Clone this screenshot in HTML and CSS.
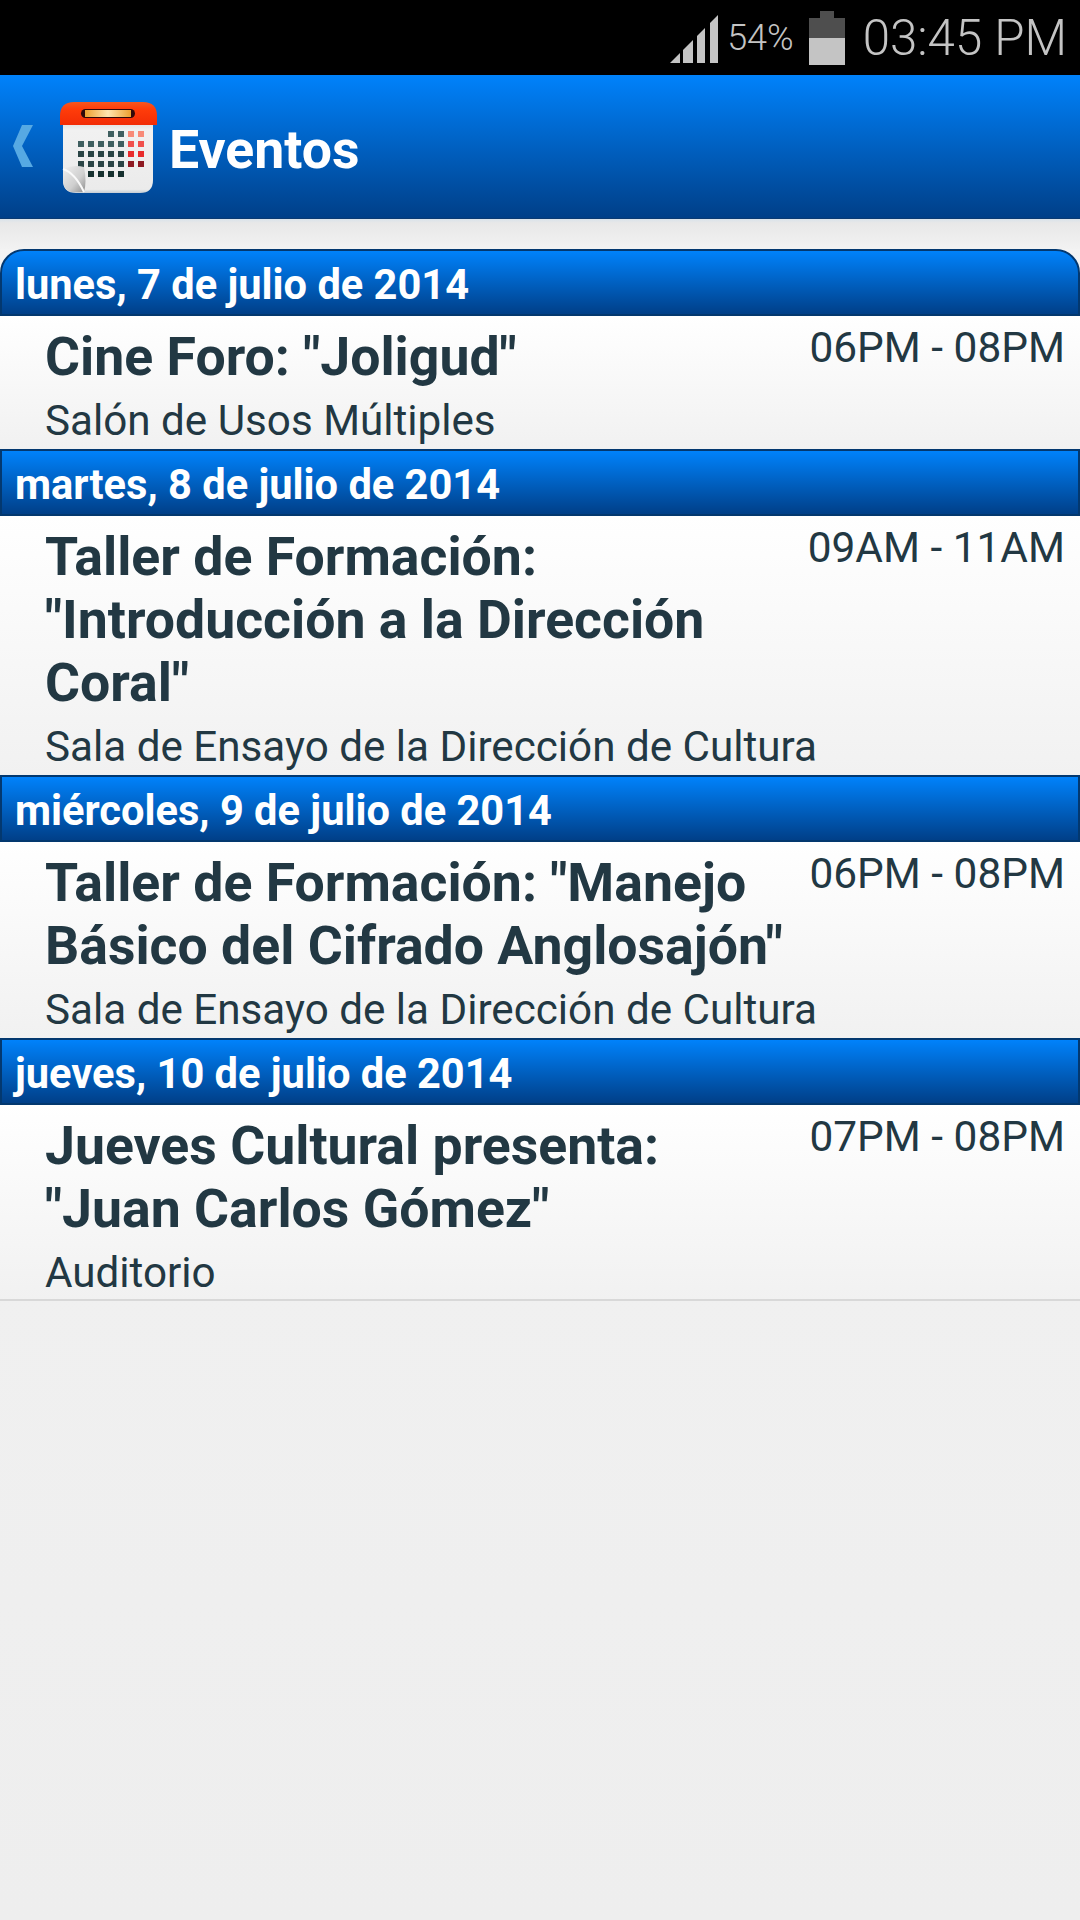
FILE: index.html
```html
<!DOCTYPE html>
<html lang="es">
<head>
    <meta charset="UTF-8">
    <meta name="viewport" content="width=device-width, initial-scale=1.0">
    <title>Eventos</title>
    <link rel="stylesheet" href="styles.css">
</head>
<body>
    <div class="statusbar">
        <svg class="signal" width="48" height="48" viewBox="0 0 48 48">
            <path d="M0 48 L10 38 V48 Z" fill="#c4c4c4"/>
            <path d="M13 35 L23 25 V48 H13 Z" fill="#c4c4c4"/>
            <path d="M27 21 L35 13 V48 H27 Z" fill="#c4c4c4"/>
            <path d="M40 8 L48 0 V48 H40 Z" fill="#c4c4c4"/>
        </svg>
        <span class="pct">54%</span>
        <svg class="battery" width="36" height="54" viewBox="0 0 36 54">
            <rect x="11" y="0" width="14" height="7" fill="#4e4e4e"/>
            <rect x="0" y="7" width="36" height="20" fill="#4e4e4e"/>
            <rect x="0" y="27" width="36" height="27" fill="#c4c4c4"/>
        </svg>
        <span class="clock">03:45 PM</span>
    </div>

    <div class="header">
        <svg class="back" width="20" height="42" viewBox="0 0 20 42">
            <path d="M9 0 H20 L9 21 L20 42 H9 L0 21 Z" fill="#56a9e3"/>
        </svg>
        <svg class="cal" width="97" height="94" viewBox="0 0 97 94">
            <defs>
                <linearGradient id="calTop" x1="0" y1="0" x2="0" y2="1">
                    <stop offset="0" stop-color="#f6571f"/>
                    <stop offset="0.3" stop-color="#ff3d0a"/>
                    <stop offset="1" stop-color="#f22c06"/>
                </linearGradient>
                <linearGradient id="calBody" x1="0" y1="0" x2="0" y2="1">
                    <stop offset="0" stop-color="#d8d8d8"/>
                    <stop offset="0.14" stop-color="#f1f1f1"/>
                    <stop offset="0.95" stop-color="#ebebeb"/>
                    <stop offset="1" stop-color="#c4ccd4"/>
                </linearGradient>
                <linearGradient id="calRing" x1="0" y1="0" x2="1" y2="0">
                    <stop offset="0" stop-color="#eea030"/>
                    <stop offset="0.5" stop-color="#ffe6b0"/>
                    <stop offset="1" stop-color="#eea030"/>
                </linearGradient>
                <linearGradient id="calCurl" x1="0" y1="0" x2="1" y2="1">
                    <stop offset="0" stop-color="#efefef"/>
                    <stop offset="0.6" stop-color="#cfcfcf"/>
                    <stop offset="1" stop-color="#8e8e8e"/>
                </linearGradient>
            </defs>
            <path d="M3 20 H93 V80 Q93 93 80 93 H16 Q3 93 3 80 Z" fill="url(#calBody)"/>
            <path d="M0 25 V16 Q0 2 14 2 H83 Q97 2 97 16 V25 Z" fill="url(#calTop)"/>
            <rect x="21" y="9" width="54" height="9" rx="4.5" fill="#30090a"/>
            <rect x="25" y="10" width="46" height="7" fill="url(#calRing)"/>
            <g fill="#3f5f60">
                <rect x="48" y="31" width="6" height="6"/><rect x="58" y="31" width="6" height="6"/>
                <rect x="18" y="41" width="6" height="6"/><rect x="28" y="41" width="6" height="6"/><rect x="38" y="41" width="6" height="6"/><rect x="48" y="41" width="6" height="6"/><rect x="58" y="41" width="6" height="6"/>
            </g>
            <g fill="#2a4445">
                <rect x="18" y="51" width="6" height="6"/><rect x="28" y="51" width="6" height="6"/><rect x="38" y="51" width="6" height="6"/><rect x="48" y="51" width="6" height="6"/><rect x="58" y="51" width="6" height="6"/>
                <rect x="18" y="61" width="6" height="6"/><rect x="28" y="61" width="6" height="6"/><rect x="38" y="61" width="6" height="6"/><rect x="48" y="61" width="6" height="6"/><rect x="58" y="61" width="6" height="6"/>
            </g>
            <g fill="#16302f">
                <rect x="28" y="71" width="6" height="6"/><rect x="38" y="71" width="6" height="6"/><rect x="48" y="71" width="6" height="6"/><rect x="58" y="71" width="6" height="6"/>
            </g>
            <g fill="#f88a78">
                <rect x="68" y="31" width="6" height="6"/><rect x="78" y="31" width="6" height="6"/>
            </g>
            <g fill="#f0504c">
                <rect x="68" y="41" width="6" height="6"/><rect x="78" y="41" width="6" height="6"/>
            </g>
            <g fill="#e82c2c">
                <rect x="68" y="51" width="6" height="6"/><rect x="78" y="51" width="6" height="6"/>
            </g>
            <g fill="#8e1a22">
                <rect x="68" y="61" width="6" height="6"/><rect x="78" y="61" width="6" height="6"/>
            </g>
            <path d="M3 69 Q14 64 24 67 Q27 82 24 92 H16 Q3 93 3 80 Z" fill="url(#calCurl)"/>
            <path d="M3 69 Q15 73 24 92" fill="none" stroke="#fafafa" stroke-width="2"/>
        </svg>
        <span class="header-title">Eventos</span>
    </div>

    <div class="lista">
        <div class="dia dia-primero">lunes, 7 de julio de 2014</div>
        <div class="evento">
            <div class="evento-top">
                <div class="evento-titulo">Cine Foro: "Joligud"</div>
                <div class="evento-hora">06PM - 08PM</div>
            </div>
            <div class="evento-lugar">Salón de Usos Múltiples</div>
        </div>

        <div class="dia">martes, 8 de julio de 2014</div>
        <div class="evento">
            <div class="evento-top">
                <div class="evento-titulo">Taller de Formación: "Introducción a la Dirección Coral"</div>
                <div class="evento-hora">09AM - 11AM</div>
            </div>
            <div class="evento-lugar">Sala de Ensayo de la Dirección de Cultura</div>
        </div>

        <div class="dia">miércoles, 9 de julio de 2014</div>
        <div class="evento">
            <div class="evento-top">
                <div class="evento-titulo">Taller de Formación: "Manejo Básico del Cifrado Anglosajón"</div>
                <div class="evento-hora">06PM - 08PM</div>
            </div>
            <div class="evento-lugar">Sala de Ensayo de la Dirección de Cultura</div>
        </div>

        <div class="dia">jueves, 10 de julio de 2014</div>
        <div class="evento evento-ultimo">
            <div class="evento-top">
                <div class="evento-titulo">Jueves Cultural presenta: "Juan Carlos Gómez"</div>
                <div class="evento-hora">07PM - 08PM</div>
            </div>
            <div class="evento-lugar">Auditorio</div>
        </div>
    </div>
</body>
</html>
```

FILE: styles.css
```css
html, body {
    margin: 0;
    padding: 0;
}
body {
    width: 1080px;
    height: 1920px;
    overflow: hidden;
    font-family: Roboto, "Liberation Sans", sans-serif;
    background: linear-gradient(#f4f4f4, #eeeeee);
}
.statusbar {
    height: 75px;
    background: #000;
    display: flex;
    align-items: center;
    justify-content: flex-end;
    padding-right: 13px;
    color: #c4c4c4;
}
.signal {
    margin-right: 9px;
    margin-top: 2px;
}
.pct {
    font-size: 36px;
    font-weight: 300;
    margin-right: 15px;
}
.battery {
    margin-right: 18px;
    margin-top: 0;
}
.clock {
    font-size: 49.2px;
    font-weight: 300;
}
.header {
    height: 144px;
    box-sizing: border-box;
    background: linear-gradient(#0082fb, #003f88);
    border-bottom: 1px solid #0b3a72;
    display: flex;
    align-items: center;
    padding-left: 13px;
}
.back {
    margin-right: 27px;
    margin-top: -1px;
}
.cal {
    margin-right: 12px;
}
.header-title {
    color: #fff;
    font-size: 53.6px;
    font-weight: 700;
    margin-top: 5px;
}
.lista {
    padding-top: 30px;
    background: linear-gradient(#d9e2ea 0, #e8e8e8 4px, #f2f2f2 30px, transparent 30px);
}
.dia {
    height: 67px;
    box-sizing: border-box;
    background: linear-gradient(#0082fb, #003f88);
    border: 2px solid #03386f;
    color: #fff;
    font-size: 41.6px;
    font-weight: 700;
    line-height: 68px;
    padding-left: 13px;
}
.dia-primero {
    border-radius: 24px 24px 0 0;
}
.evento {
    background: linear-gradient(#ffffff, #f1f1f1);
    padding: 9px 15px 0 45px;
    color: #223843;
}
.evento-ultimo {
    box-shadow: inset 0 -2px #d8d8d8;
}
.evento-top {
    display: flex;
    align-items: flex-start;
    justify-content: space-between;
}
.evento-titulo {
    width: 750px;
    font-size: 53.6px;
    font-weight: 700;
    line-height: 63px;
}
.evento-hora {
    font-size: 42.4px;
    line-height: 46px;
    white-space: nowrap;
}
.evento-lugar {
    font-size: 42.2px;
    height: 61px;
    line-height: 66px;
}
```
